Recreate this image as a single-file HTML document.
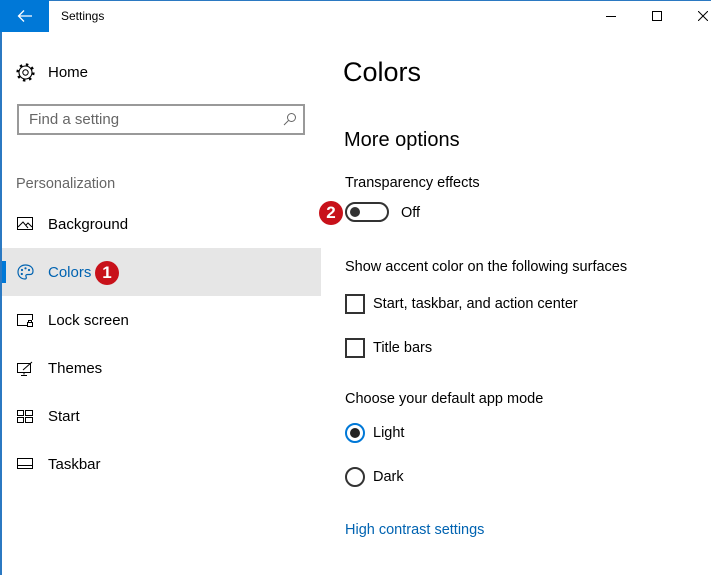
<!DOCTYPE html>
<html><head><meta charset="utf-8"><style>
*{margin:0;padding:0;box-sizing:border-box}
body{width:711px;height:575px;overflow:hidden;background:#fff;font-family:"Liberation Sans",sans-serif;color:#000;position:relative}
.a{position:absolute;white-space:nowrap}
.nav{font-size:15px;left:48px}
.t{font-size:14.5px}
svg{position:absolute}
</style></head><body>
<div class="a" style="left:0;top:0;width:711px;height:1px;background:#2b79c2"></div>
<div class="a" style="left:0;top:0;width:2px;height:575px;background:#2b79c2"></div>
<div class="a" style="left:0;top:0;width:49px;height:32px;background:#0078d7"></div>
<svg style="left:17px;top:9px" width="16" height="14" viewBox="0 0 16 14"><path d="M15 7H2M7 1.5L1.5 7 7 12.5" stroke="#fff" stroke-width="1.3" fill="none"/></svg>
<div class="a" style="left:61px;top:9px;font-size:12px">Settings</div>
<div class="a" style="left:606px;top:16px;width:10px;height:1px;background:#000"></div>
<div class="a" style="left:652px;top:11px;width:10px;height:10px;border:1px solid #000"></div>
<svg style="left:698px;top:11px" width="10" height="10"><path d="M0 0L10 10M10 0L0 10" stroke="#000" stroke-width="1"/></svg>

<svg style="left:16px;top:63px" width="19" height="19" viewBox="0 0 19 19"><circle cx="9.5" cy="9.5" r="2.7" fill="none" stroke="#000"/><circle cx="9.5" cy="9.5" r="6.5" fill="none" stroke="#000" stroke-width="1.1"/><circle cx="9.5" cy="9.5" r="8" fill="none" stroke="#000" stroke-width="2.2" stroke-dasharray="2.5 3.8"/></svg>
<div class="a nav" style="top:64px">Home</div>

<div class="a" style="left:17px;top:104px;width:288px;height:31px;border:2px solid #999"></div>
<div class="a" style="left:29px;top:111px;font-size:15px;color:#666">Find a setting</div>
<svg style="left:283px;top:112px" width="14" height="14"><circle cx="8.5" cy="5.5" r="4" fill="none" stroke="#666"/><path d="M5.5 8.5L1 13" stroke="#666"/></svg>

<div class="a" style="left:16px;top:176px;font-size:14.5px;color:#666">Personalization</div>

<svg style="left:17px;top:217px" width="16" height="14"><rect x="0.5" y="0.5" width="15" height="12" fill="none" stroke="#000"/><path d="M1 10L6 5 11 11M9 8l2-2 4 4" stroke="#000" fill="none"/></svg>
<div class="a nav" style="top:216px">Background</div>

<div class="a" style="left:2px;top:248px;width:319px;height:48px;background:#e6e6e6"></div>
<div class="a" style="left:2px;top:261px;width:4px;height:22px;background:#0078d7"></div>
<svg style="left:17px;top:264px" width="17" height="16" viewBox="0 0 17 16"><path d="M8.5 1C4 1 1 4 1 8s3 7 7 7c1.5 0 1.5-1.5 1-2.5s0-2 1.5-2H13c2 0 3-1.5 3-3.5C16 3.5 13 1 8.5 1z" fill="none" stroke="#0063b1" stroke-width="1.2"/><circle cx="5" cy="6" r="1.1" fill="#0063b1"/><circle cx="8.5" cy="4.3" r="1.1" fill="#0063b1"/><circle cx="12" cy="6" r="1.1" fill="#0063b1"/><circle cx="4.8" cy="10" r="1.1" fill="#0063b1"/></svg>
<div class="a nav" style="top:264px;color:#0063b1">Colors</div>
<div class="a" style="left:95px;top:261px;width:24px;height:24px;border-radius:50%;background:#c8111a;color:#fff;font-weight:bold;font-size:17px;text-align:center;line-height:24px">1</div>

<svg style="left:17px;top:314px" width="17" height="14"><path d="M10 11.5H0.5V0.5H15.5V6" fill="none" stroke="#000"/><rect x="10.5" y="8.5" width="5" height="4" fill="none" stroke="#000"/><path d="M11.5 8.5V6.5h3v2" fill="none" stroke="#000"/></svg>
<div class="a nav" style="top:312px">Lock screen</div>

<svg style="left:17px;top:361px" width="17" height="15"><rect x="0.5" y="2.5" width="13" height="9" fill="none" stroke="#000"/><path d="M7 13.5v-2M4 14.5h6M6 9l9-8" stroke="#000" fill="none"/></svg>
<div class="a nav" style="top:360px">Themes</div>

<svg style="left:17px;top:410px" width="16" height="13"><rect x="0.5" y="0.5" width="6" height="5" fill="none" stroke="#000"/><rect x="8.5" y="0.5" width="7" height="5" fill="none" stroke="#000"/><rect x="0.5" y="7.5" width="6" height="5" fill="none" stroke="#000"/><rect x="8.5" y="7.5" width="7" height="5" fill="none" stroke="#000"/></svg>
<div class="a nav" style="top:408px">Start</div>

<svg style="left:17px;top:458px" width="16" height="11"><rect x="0.5" y="0.5" width="15" height="10" fill="none" stroke="#000"/><path d="M1 7.5h14" stroke="#000"/></svg>
<div class="a nav" style="top:456px">Taskbar</div>

<div class="a" style="left:343px;top:57px;font-size:27px">Colors</div>
<div class="a" style="left:344px;top:129px;font-size:20px">More options</div>
<div class="a t" style="left:345px;top:175px">Transparency effects</div>
<div class="a" style="left:319px;top:201px;width:24px;height:24px;border-radius:50%;background:#c8111a;color:#fff;font-weight:bold;font-size:17px;text-align:center;line-height:24px">2</div>
<div class="a" style="left:345px;top:202px;width:44px;height:20px;border:2px solid #333;border-radius:10px"></div>
<div class="a" style="left:350px;top:207px;width:10px;height:10px;border-radius:50%;background:#333"></div>
<div class="a t" style="left:401px;top:205px">Off</div>

<div class="a t" style="left:345px;top:259px">Show accent color on the following surfaces</div>
<div class="a" style="left:345px;top:294px;width:20px;height:20px;border:2px solid #333"></div>
<div class="a t" style="left:373px;top:296px">Start, taskbar, and action center</div>
<div class="a" style="left:345px;top:338px;width:20px;height:20px;border:2px solid #333"></div>
<div class="a t" style="left:373px;top:340px">Title bars</div>

<div class="a t" style="left:345px;top:391px">Choose your default app mode</div>
<div class="a" style="left:345px;top:423px;width:20px;height:20px;border:2px solid #0078d7;border-radius:50%"></div>
<div class="a" style="left:350px;top:428px;width:10px;height:10px;border-radius:50%;background:#222"></div>
<div class="a t" style="left:373px;top:425px">Light</div>
<div class="a" style="left:345px;top:467px;width:20px;height:20px;border:2px solid #333;border-radius:50%"></div>
<div class="a t" style="left:373px;top:469px">Dark</div>

<div class="a t" style="left:345px;top:522px;color:#0063b1">High contrast settings</div>
</body></html>
